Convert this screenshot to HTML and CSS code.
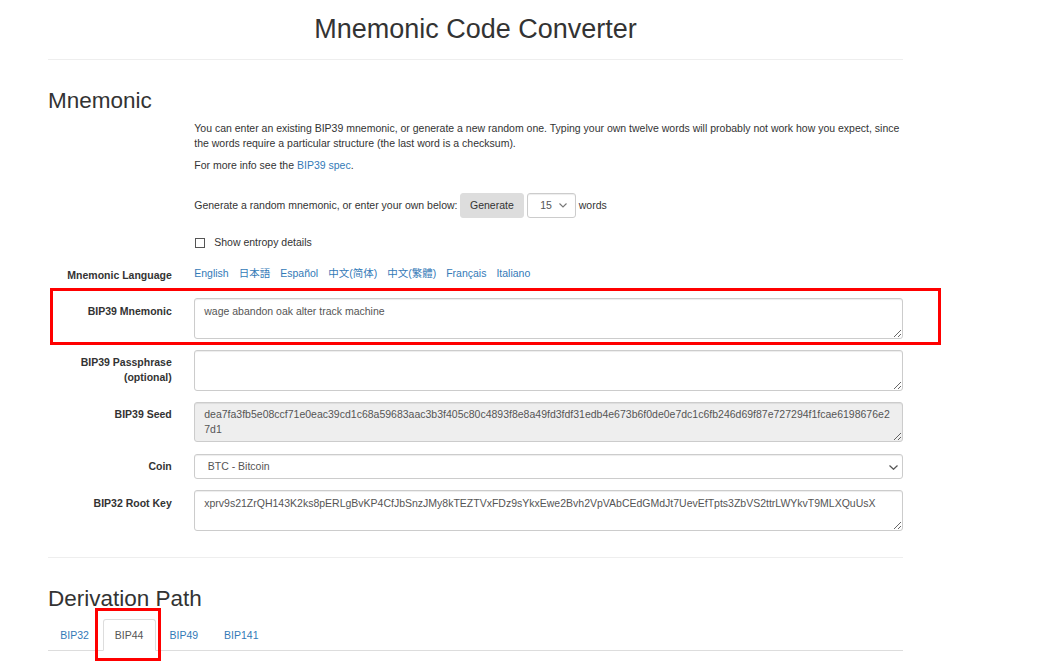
FILE: index.html
```html
<!DOCTYPE html>
<html lang="en">
<head>
<meta charset="utf-8">
<title>Mnemonic Code Converter</title>
<link rel="stylesheet" href="styles.css">
</head>
<body>
<div class="container">
  <h1 class="title">Mnemonic Code Converter</h1>
  <hr class="rule rule-top">
  <h2 class="section-title">Mnemonic</h2>

  <div class="row intro">
    <div class="ctl">
      <p class="p1">You can enter an existing BIP39 mnemonic, or generate a new random one. Typing your own twelve words will probably not work how you expect, since<br>the words require a particular structure (the last word is a checksum).</p>
      <p class="p2">For more info see the <a href="#" class="link">BIP39 spec</a>.</p>
    </div>
  </div>

  <div class="row gen-row">
    <div class="ctl gen-line">
      <span>Generate a random mnemonic, or enter your own below:</span>
      <button class="btn" type="button">Generate</button>
      <span class="select-wrap small">
        <select class="select num"><option>15</option></select>
        <svg class="chev" width="8" height="5" viewBox="0 0 8 5"><path d="M0.5 0.5 L4 4 L7.5 0.5" fill="none" stroke="#777" stroke-width="1.1"/></svg>
      </span>
      <span>words</span>
    </div>
  </div>

  <div class="row check-row">
    <label class="ctl check-line"><input type="checkbox" class="check"><span>Show entropy details</span></label>
  </div>

  <div class="row lang-row">
    <div class="lbl">Mnemonic Language</div>
    <div class="ctl langs">
      <a href="#" class="link">English</a>
      <a href="#" class="link" lang="ja">日本語</a>
      <a href="#" class="link">Español</a>
      <a href="#" class="link" lang="zh-CN">中文(简体)</a>
      <a href="#" class="link" lang="zh-TW">中文(繁體)</a>
      <a href="#" class="link">Français</a>
      <a href="#" class="link">Italiano</a>
    </div>
  </div>

  <div class="row fg first-fg">
    <div class="lbl">BIP39 Mnemonic</div>
    <div class="ctl"><textarea class="control area">wage abandon oak alter track machine</textarea></div>
  </div>

  <div class="row fg">
    <div class="lbl">BIP39 Passphrase<br>(optional)</div>
    <div class="ctl"><textarea class="control area"></textarea></div>
  </div>

  <div class="row fg">
    <div class="lbl">BIP39 Seed</div>
    <div class="ctl"><textarea class="control area readonly" readonly>dea7fa3fb5e08ccf71e0eac39cd1c68a59683aac3b3f405c80c4893f8e8a49fd3fdf31edb4e673b6f0de0e7dc1c6fb246d69f87e727294f1fcae6198676e27d1</textarea></div>
  </div>

  <div class="row fg">
    <div class="lbl">Coin</div>
    <div class="ctl">
      <span class="select-wrap full">
        <select class="select coin"><option>BTC - Bitcoin</option></select>
        <svg class="chev chev-coin" width="9" height="5" viewBox="0 0 9 5"><path d="M0.5 0.5 L4.5 4.3 L8.5 0.5" fill="none" stroke="#555" stroke-width="1.2"/></svg>
      </span>
    </div>
  </div>

  <div class="row fg">
    <div class="lbl">BIP32 Root Key</div>
    <div class="ctl"><textarea class="control area">xprv9s21ZrQH143K2ks8pERLgBvKP4CfJbSnzJMy8kTEZTVxFDz9sYkxEwe2Bvh2VpVAbCEdGMdJt7UevEfTpts3ZbVS2ttrLWYkvT9MLXQuUsX</textarea></div>
  </div>

  <hr class="rule rule-mid">
  <h2 class="section-title">Derivation Path</h2>

  <ul class="tabs">
    <li class="tab"><a href="#">BIP32</a></li>
    <li class="tab active"><a href="#">BIP44</a></li>
    <li class="tab"><a href="#">BIP49</a></li>
    <li class="tab"><a href="#">BIP141</a></li>
  </ul>
</div>

<div class="mark mark-mnemonic"></div>
<div class="mark mark-tab"></div>
</body>
</html>
```

FILE: styles.css
```css
* { box-sizing: border-box; }

html, body { height: 100%; }

body {
  margin: 0;
  font-family: "Liberation Sans", Arial, "Noto Sans CJK SC", sans-serif;
  font-size: 10.5px;
  line-height: 15px;
  color: #333;
  background: #fff;
  overflow: hidden;
}

.container {
  width: 855px;
  margin-left: 48px;
}

.title {
  margin: 14px 0 0;
  font-size: 27px;
  line-height: 30px;
  font-weight: normal;
  text-align: center;
  color: #333;
}

.rule {
  border: 0;
  border-top: 1px solid #eee;
  height: 0;
  margin: 0;
}
.rule-top { margin-top: 15px; }
.rule-mid { margin-top: 26.5px; }

.section-title {
  margin: 28.8px 0 0;
  font-size: 22.5px;
  line-height: 24.75px;
  font-weight: normal;
  color: #333;
}

.row {
  display: grid;
  grid-template-columns: 123.75px 708.75px;
  column-gap: 22.5px;
}
.ctl { grid-column: 2; min-width: 0; }

.link { color: #337ab7; text-decoration: none; }

.intro { margin-top: 7px; }
.p1 { margin: 0; white-space: nowrap; }
.p2 { margin: 7.5px 0 0; }

.gen-row { margin-top: 19.5px; }
.gen-line {
  display: flex;
  align-items: center;
  gap: 2.5px;
  height: 25.5px;
}
.btn {
  font: inherit;
  font-size: 10.5px;
  line-height: 15px;
  color: #333;
  background: #dddddd;
  border: 1px solid #dddddd;
  border-radius: 3px;
  padding: 4.25px 9px;
  height: 25.5px;
  margin: 0;
}

.select-wrap { position: relative; display: inline-block; }
.select-wrap.small { width: 49px; margin-left: 1px; }
.select-wrap.full { display: block; width: 100%; }

.select {
  appearance: none;
  -webkit-appearance: none;
  display: block;
  width: 100%;
  height: 25.5px;
  margin: 0;
  font: inherit;
  font-size: 10.5px;
  line-height: 15px;
  color: #555;
  background: #fff;
  border: 1px solid #ccc;
  border-radius: 3px;
  box-shadow: inset 0 1px 1px rgba(0,0,0,.075);
  padding: 0 9px 0 12px;
}
.select.coin { padding-left: 12.5px; }

.chev {
  position: absolute;
  right: 9px;
  top: 10.5px;
  pointer-events: none;
}
.chev-coin { right: 5px; top: 11px; }

.check-row { margin-top: 17px; }
.check-line {
  display: flex;
  align-items: center;
  height: 15px;
  gap: 9px;
}
.check {
  appearance: none;
  -webkit-appearance: none;
  width: 10px;
  height: 10px;
  margin: 0 0 0 1px;
  border: 1px solid #555;
  background: #fff;
  border-radius: 0;
}

.lang-row { margin-top: 12.3px; height: 25.5px; }
.lbl {
  grid-column: 1;
  text-align: right;
  font-weight: bold;
  padding-top: 5.25px;
  color: #333;
}
.langs {
  display: flex;
  gap: 10px;
  padding-top: 3.9px;
  font-family: "Liberation Sans", Arial, "Noto Sans CJK SC", sans-serif;
}
.langs a[lang="ja"] { font-family: "Liberation Sans", "Noto Sans CJK JP", sans-serif; }
.langs a[lang="zh-TW"] { font-family: "Liberation Sans", "Noto Sans CJK TC", sans-serif; }

.fg { margin-top: 11.25px; }
.first-fg { margin-top: 10.6px; }

.control {
  display: block;
  width: 100%;
  margin: 0;
  font: inherit;
  font-size: 10.5px;
  line-height: 15px;
  color: #555;
  background: #fff;
  border: 1px solid #ccc;
  border-radius: 3px;
  box-shadow: inset 0 1px 1px rgba(0,0,0,.075);
  padding: 4.5px 9px;
}
.area { height: 40.5px; resize: vertical; overflow: hidden; }
.readonly { background: #eee; }

.tabs {
  list-style: none;
  margin: 7.5px 0 0;
  padding: 0;
  display: flex;
  border-bottom: 1px solid #ddd;
}
.tab { margin-bottom: -1px; margin-right: 1.5px; }
.tab a {
  display: block;
  padding: 7.5px 11.25px;
  line-height: 15px;
  border: 1px solid transparent;
  border-radius: 3px 3px 0 0;
  color: #337ab7;
  text-decoration: none;
}
.tab.active a {
  color: #555;
  background: #fff;
  border-color: #ddd #ddd transparent #ddd;
}

.mark {
  position: absolute;
  border: 3px solid #ff0000;
  pointer-events: none;
}
.mark-mnemonic { left: 50px; top: 288px; width: 891px; height: 57px; }
.mark-tab { left: 95px; top: 608px; width: 66px; height: 53px; }
```
